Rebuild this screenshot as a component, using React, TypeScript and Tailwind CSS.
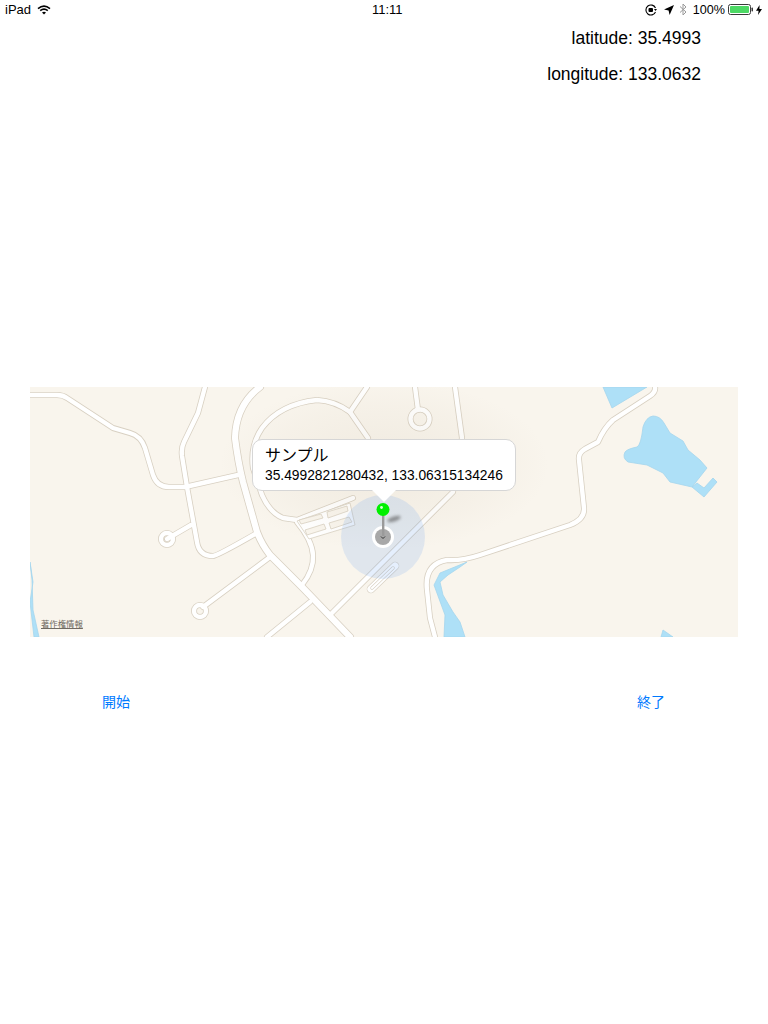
import React from 'react';

const roads: string[] = [
  // long road from the left edge
  'M30 395 L57 395 Q63 395 67 398 L113 428 L130 433 Q141 436 145 448 L153 475 Q157 487 169 487 L185 487 L238 475',
  // north-south road and its loop
  'M205 387 L198 413 L184 442 Q181 448 182 456 L187 487 L197 542 Q199 556 213 556 Q217 556 257 533',
  'M191 525 L167 539',
  'M270 557 L203 607',
  'M310 602 L267 637',
  // ring around the callout
  'M353 498 L297 520 L283 518 Q270 513 262 495 L253 468 Q250 445 262 428 Q280 404 317 400 Q335 401 350 412 L368 438',
  'M350 412 L367 387',
  'M297 522 Q312 540 313 555 Q314 570 302 585',
  // diagonal and right hand road
  'M329 616 L453 492 L462 438 L455 387',
  'M415 387 L418 410',
  'M435 637 L430 618 L427 590 Q424 564 447 560 Q462 561 480 555 L570 525 Q585 519 584 508 L579 460 Q578 453 585 449 L598 442 Q604 428 613 420 L650 396 Q656 392 655 387',
];

const mainRoad = 'M260 387 Q236 405 235 438 Q238 462 243 482 L257 532 Q262 545 270 555 L303 588 L350 637';

const islands: string[] = [
  '299,520 321,514 323,518 301,524',
  '327,512 347,506 348,511 328,518',
  '305,530 324,524 326,529 307,535',
  '329,523 349,517 352,522 331,529',
];

const Status = () => (
  <div className="flex h-5 items-center pl-[5px] pr-[6px] text-[13px] text-black">
    <div className="flex w-[367px] items-center gap-[6px]">
      <span>iPad</span>
      <svg width="14" height="10" viewBox="0 0 14 10" fill="none" stroke="#000" strokeWidth="1.6">
        <path d="M1 3.6 Q7 -1.4 13 3.6" />
        <path d="M3.2 5.6 Q7 2.6 10.8 5.6" />
        <path d="M5 7.6 Q7 6 9 7.6 L7 9.6 Z" fill="#000" stroke="none" />
      </svg>
    </div>
    <span>11:11</span>
    <div className="ml-auto flex items-center">
      <svg width="12" height="12" viewBox="0 0 12 12" fill="none" className="mr-[7px]">
        <path d="M10.5 8 A5 5 0 1 1 10.5 4" stroke="#000" strokeWidth="1.1" />
        <rect x="3.5" y="4" width="4.5" height="4" rx="1" fill="#000" />
        <path d="M9 5 L12 5 L10.5 7 Z" fill="#000" />
      </svg>
      <svg width="10" height="10" viewBox="0 0 10 10" className="mr-[5px]">
        <path d="M10 0 L5.6 10 L4.6 5.4 L0 4.4 Z" fill="#000" />
      </svg>
      <svg width="8" height="13" viewBox="0 0 8 13" fill="none" stroke="#999" strokeWidth="1" className="mr-[6px]">
        <path d="M1 3.5 L7 9 L4 12 L4 1 L7 4 L1 9.5" />
      </svg>
      <span className="text-[12.6px]">100%</span>
      <svg width="25" height="11" viewBox="0 0 25 11" className="ml-[3px]">
        <rect x="0.5" y="0.5" width="22" height="10" rx="2" fill="none" stroke="#3a3a3a" />
        <rect x="2" y="2" width="19" height="7" rx="1" fill="#4cd964" />
        <rect x="23.5" y="3.5" width="1.5" height="4" rx="0.7" fill="#3a3a3a" />
      </svg>
      <svg width="6" height="10" viewBox="0 0 6 10" className="ml-[3px]">
        <path d="M3.6 0 L0 5.8 L2.6 5.8 L2 10 L6 4 L3.4 4 Z" fill="#000" />
      </svg>
    </div>
  </div>
);

const MapArt = () => (
  <svg width="708" height="250" viewBox="30 387 708 250" className="block">
    <defs>
      <filter id="pinShadow" x="-50%" y="-100%" width="200%" height="300%">
        <feGaussianBlur stdDeviation="1.8" />
      </filter>
      <radialGradient id="glow">
        <stop offset="0%" stopColor="#b8a78c" stopOpacity="0.14" />
        <stop offset="70%" stopColor="#b8a78c" stopOpacity="0.05" />
        <stop offset="100%" stopColor="#b8a78c" stopOpacity="0" />
      </radialGradient>
    </defs>
    <rect x="30" y="387" width="708" height="250" fill="#f9f5ed" />
    <g fill="#aee0f7" stroke="#a4d6ee" strokeWidth="0.8" strokeLinejoin="round">
      <path d="M603 387 L612 408 L647 387 Z" />
      <path d="M625 452 Q627 449 637 447 Q641 445 643 427 Q646 417 653 416 Q660 416 664 423 L670 433 L683 441 L688 450 L700 460 L707 468 L692 487 L670 482 L663 473 L647 465 L628 462 Q622 458 625 452 Z" />
      <path d="M692 487 L704 497 L717 482 L713 478 L704 488 L697 483 Z" />
      <path d="M663 630 L661 637 L673 637 Z" />
      <path d="M30 562 L33 582 L30 602 L34 637 L39 637 L33 610 L32 580 Z" />
      <path d="M467 562 L440 573 L434 585 L445 615 L444 637 L465 637 L460 622 L453 612 L443 595 L440 582 L448 575 L460 567 Z" />
    </g>
    <g fill="none" strokeLinecap="round" strokeLinejoin="round">
      <g stroke="#d8d0c2" strokeWidth="6">
        {roads.map((d, i) => <path key={i} d={d} />)}
        <path d={mainRoad} strokeWidth="7.8" />
        <path d="M371 589 L395 566" strokeWidth="8.5" />
        <circle cx="167" cy="539" r="6" />
        <circle cx="200" cy="611" r="6" />
        <circle cx="420" cy="419" r="9.5" />
      </g>
      <g stroke="#fff" strokeWidth="4.4">
        {roads.map((d, i) => <path key={i} d={d} />)}
        <path d={mainRoad} strokeWidth="6.2" />
        <path d="M371 589 L395 566" strokeWidth="7.2" />
        <circle cx="167" cy="539" r="6" />
        <circle cx="200" cy="611" r="6" />
        <circle cx="420" cy="419" r="9.5" />
      </g>
      <path d="M372 588 L393 568" stroke="#d8d0c2" strokeWidth="3.4" />
      <path d="M372 588 L393 568" stroke="#fff" strokeWidth="2.2" />
    </g>
    <polygon points="297,521 350,503 355,525 309,539" fill="#fff" stroke="#d8d0c2" strokeWidth="0.8" strokeLinejoin="round" />
    {islands.map((p, i) => <polygon key={i} points={p} fill="#f9f5ed" stroke="#d8d0c2" strokeWidth="0.8" />)}
    <ellipse cx="384" cy="465" rx="165" ry="85" fill="url(#glow)" />
    <circle cx="383" cy="537" r="42" fill="rgb(81,150,243)" fillOpacity="0.15" />
    <ellipse cx="394" cy="519" rx="7" ry="2.6" fill="#555" opacity="0.6" filter="url(#pinShadow)" transform="rotate(-18 394 519)" />
    <circle cx="383" cy="537" r="11" fill="#fff" />
    <circle cx="383" cy="537" r="8" fill="#a8a8a8" />
    <path d="M381 536.5 L383 538.5 L385 536.5" fill="none" stroke="#333" strokeWidth="1" />
    <rect x="382" y="512" width="2.4" height="24" fill="#9a9a9a" />
    <circle cx="383" cy="509.5" r="6.5" fill="#00f000" />
    <circle cx="381.5" cy="507.5" r="1.4" fill="#d8ffd8" />
  </svg>
);

export default function App() {
  return (
    <div className="h-[1024px] w-[768px] overflow-hidden bg-white font-['Liberation_Sans','Noto_Sans_CJK_JP',sans-serif]">
      <Status />
      <div className="mt-2 flex flex-col items-end gap-4 pr-[67px] text-[17.5px] leading-5 text-black">
        <p>latitude: 35.4993</p>
        <p>longitude: 133.0632</p>
      </div>
      <div className="relative ml-[30px] mt-[303px] h-[250px] w-[708px] overflow-hidden">
        <MapArt />
        <div className="absolute left-[222px] top-[52px] h-[52px] w-[264px] rounded-[10px] border border-[#d6d6d6] bg-white pl-[12px] pt-[5px] text-black">
          <div className="text-[16px] leading-[21px]">サンプル</div>
          <div className="text-[13.8px] leading-[20px]">35.4992821280432, 133.06315134246</div>
        </div>
        <div className="absolute left-[342px] top-[103px] h-0 w-0 border-x-[12px] border-t-[12px] border-x-transparent border-t-white" />
        <span className="absolute left-[11px] top-[231px] text-[8.4px] leading-3 text-[#6f6a62] underline">著作権情報</span>
      </div>
      <div className="mt-[50px] flex justify-between text-[14px] leading-[30px] text-[#007aff]">
        <button className="ml-[30px] w-[172px]">開始</button>
        <button className="mr-[30px] w-[174px]">終了</button>
      </div>
    </div>
  );
}
